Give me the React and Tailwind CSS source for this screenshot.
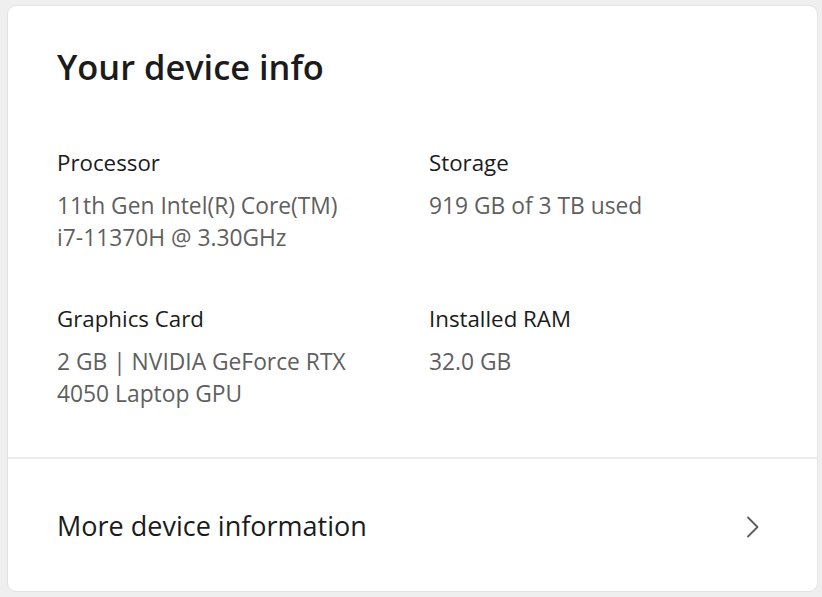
const specs = [
  {
    label: 'Processor',
    value: ['11th Gen Intel(R) Core(TM)', 'i7-11370H @ 3.30GHz'],
  },
  { label: 'Storage', value: ['919 GB of 3 TB used'] },
  {
    label: 'Graphics Card',
    value: ['2 GB | NVIDIA GeForce RTX', '4050 Laptop GPU'],
  },
  { label: 'Installed RAM', value: ['32.0 GB'] },
];

function SpecItem({ label, value }) {
  return (
    <div className="h-[156px]">
      <div className="text-[22.3px] leading-[32px] text-[#1b1b1b]">{label}</div>
      <div className="mt-[11px] text-[22.8px] leading-[32px] text-[#5f5f5f]">
        {value.map((line) => (
          <div key={line}>{line}</div>
        ))}
      </div>
    </div>
  );
}

export default function App() {
  return (
    <div
      className="w-[822px] h-[597px] bg-[#efefef] pt-[5px] pl-[7px]"
      style={{ fontFamily: '"Open Sans", "Noto Sans", sans-serif' }}
    >
      <div className="w-[811px] h-[587px] bg-white border border-[#e3e3e3] rounded-[9px] flex flex-col">
        <div className="px-[49px] pt-[41px] h-[451px]">
          <h1 className="text-[34.4px] leading-[40px] font-semibold text-[#1b1b1b]">
            Your device info
          </h1>
          <div className="mt-[60px] grid grid-cols-[372px_1fr]">
            {specs.map((s) => (
              <SpecItem key={s.label} label={s.label} value={s.value} />
            ))}
          </div>
        </div>
        <div className="h-[2px] bg-[#ececec]" />
        <div className="flex-1 flex items-center justify-between pl-[49px] pr-[57px] pt-[3px]">
          <span className="text-[27px] text-[#1b1b1b]">More device information</span>
          <svg width="14" height="22" viewBox="0 0 14 22" fill="none">
            <path
              d="M2 1.5 L11.5 11 L2 20.5"
              stroke="#5c5c5c"
              strokeWidth="1.8"
              strokeLinecap="round"
              strokeLinejoin="round"
            />
          </svg>
        </div>
      </div>
    </div>
  );
}
